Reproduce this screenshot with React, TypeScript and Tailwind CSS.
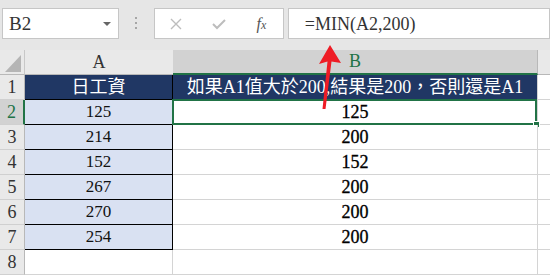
import React from "react";

const serif = { fontFamily: '"Liberation Serif", "Noto Sans CJK TC", serif' };

const aVals = ["125", "214", "152", "267", "270", "254"];
const bVals = ["125", "200", "152", "200", "200", "200"];

function RowHeader({ n, selected }: { n: number; selected?: boolean }) {
  return (
    <div
      className={
        "h-[25px] flex items-center justify-center border-b border-[#d0d0d0] text-[18px] " +
        (selected
          ? "bg-[#d2d2d2] border-r-2 border-r-[#217346] text-[#217346]"
          : "bg-[#e9e9e9] border-r border-r-[#b8b8b8] text-[#333]")
      }
    >
      {n}
    </div>
  );
}

export default function App() {
  return (
    <div
      className="relative w-[550px] h-[275px] overflow-hidden bg-[#e6e6e6] text-[#222]"
      style={serif}
    >
      {/* Top bar */}
      <div className="h-[50px] flex items-start pt-[8px] pl-[2px]">
        <div className="w-[120px] h-[31px] bg-white border border-[#c6c6c6] flex items-center justify-between pl-[6px] pr-[7px]">
          <span className="text-[19px] text-[#333] leading-none">B2</span>
          <span className="w-0 h-0 border-l-[4px] border-r-[4px] border-t-[4px] border-l-transparent border-r-transparent border-t-[#666]" />
        </div>
        <div className="ml-[16px] mt-[9px] flex flex-col gap-[3px]">
          <span className="w-[2px] h-[2px] bg-[#a6a6a6]" />
          <span className="w-[2px] h-[2px] bg-[#a6a6a6]" />
          <span className="w-[2px] h-[2px] bg-[#a6a6a6]" />
        </div>
        <div className="ml-[17px] w-[130px] h-[31px] bg-white border border-[#c6c6c6] flex items-center">
          <span className="w-[44px] flex justify-center">
            <svg width="12" height="12" viewBox="0 0 12 12">
              <path d="M1 1 L11 11 M11 1 L1 11" stroke="#bdbdbd" strokeWidth="1.4" fill="none" />
            </svg>
          </span>
          <span className="w-[44px] flex justify-center">
            <svg width="14" height="12" viewBox="0 0 14 12">
              <path d="M1 6 L5 10 L13 2" stroke="#bdbdbd" strokeWidth="2" fill="none" />
            </svg>
          </span>
          <span className="w-[44px] flex justify-center">
            <span className="italic text-[16px] text-[#555] leading-none">
              f<span className="text-[12px]">x</span>
            </span>
          </span>
        </div>
        <div className="ml-[4px] w-[270px] h-[31px] bg-white border border-[#c6c6c6] flex items-center pl-[16px]">
          <span className="text-[18px] text-[#333] leading-none">=MIN(A2,200)</span>
        </div>
      </div>

      {/* Grid */}
      <div className="grid grid-cols-[25px_148px_365px_12px]">
        {/* column headers */}
        <div className="h-[25px] bg-[#e9e9e9] border-r border-[#c8c8c8] border-b border-b-[#b8b8b8] relative">
          <svg className="absolute left-0 top-0" width="24" height="24" viewBox="0 0 24 24">
            <polygon points="5,22 21,5 21,22" fill="#b5b5b5" />
          </svg>
        </div>
        <div className="h-[25px] bg-[#e9e9e9] border-b border-[#b8b8b8] flex items-center justify-center text-[18px] text-[#333]">
          A
        </div>
        <div className="h-[25px] bg-[#d2d2d2] border-b-2 border-[#217346] border-r border-r-[#b8b8b8] flex items-center justify-center text-[18px] text-[#217346]">
          B
        </div>
        <div className="h-[25px] bg-[#e9e9e9] border-b border-[#b8b8b8]" />

        {/* row 1 */}
        <RowHeader n={1} />
        <div className="h-[25px] bg-[#203764] border-b border-r border-black flex items-center justify-center text-[18px] text-white">
          日工資
        </div>
        <div className="h-[25px] bg-[#203764] border-r border-[#d4d4d4] flex items-center justify-center text-[18px] text-white whitespace-nowrap">
          如果A1值大於200,結果是200，否則還是A1
        </div>
        <div className="h-[25px] bg-white border-b border-[#d4d4d4]" />

        {aVals.map((a, i) => (
          <React.Fragment key={i}>
            <RowHeader n={i + 2} selected={i === 0} />
            <div className="h-[25px] bg-[#d9e1f2] border-b border-r border-black flex items-center justify-center text-[17px] text-[#111]">
              {a}
            </div>
            <div className="relative h-[25px] bg-white border-b border-r border-[#d4d4d4] flex items-center justify-center text-[18px] text-black [-webkit-text-stroke:0.3px_black]">
              {bVals[i]}
              {i === 0 && (
                <>
                  <div className="absolute left-[-1px] top-[-1px] right-0 bottom-[-1px] border-2 border-[#217346]" />
                  <div className="absolute right-[-3px] bottom-[-4px] w-[7px] h-[7px] bg-[#217346] border border-white" />
                </>
              )}
            </div>
            <div className="h-[25px] bg-white border-b border-[#d4d4d4]" />
          </React.Fragment>
        ))}

        {/* row 8 */}
        <RowHeader n={8} />
        <div className="h-[25px] bg-white border-b border-r border-[#d4d4d4]" />
        <div className="h-[25px] bg-white border-b border-r border-[#d4d4d4]" />
        <div className="h-[25px] bg-white border-b border-[#d4d4d4]" />
      </div>

      {/* Red arrow annotation */}
      <svg className="absolute left-0 top-0 pointer-events-none" width="550" height="275" viewBox="0 0 550 275">
        <polygon
          points="330,45 341,63 331.5,61.5 325.5,109 322.5,109 327.5,61.5 319,64"
          fill="#ee1c25"
        />
      </svg>
    </div>
  );
}
